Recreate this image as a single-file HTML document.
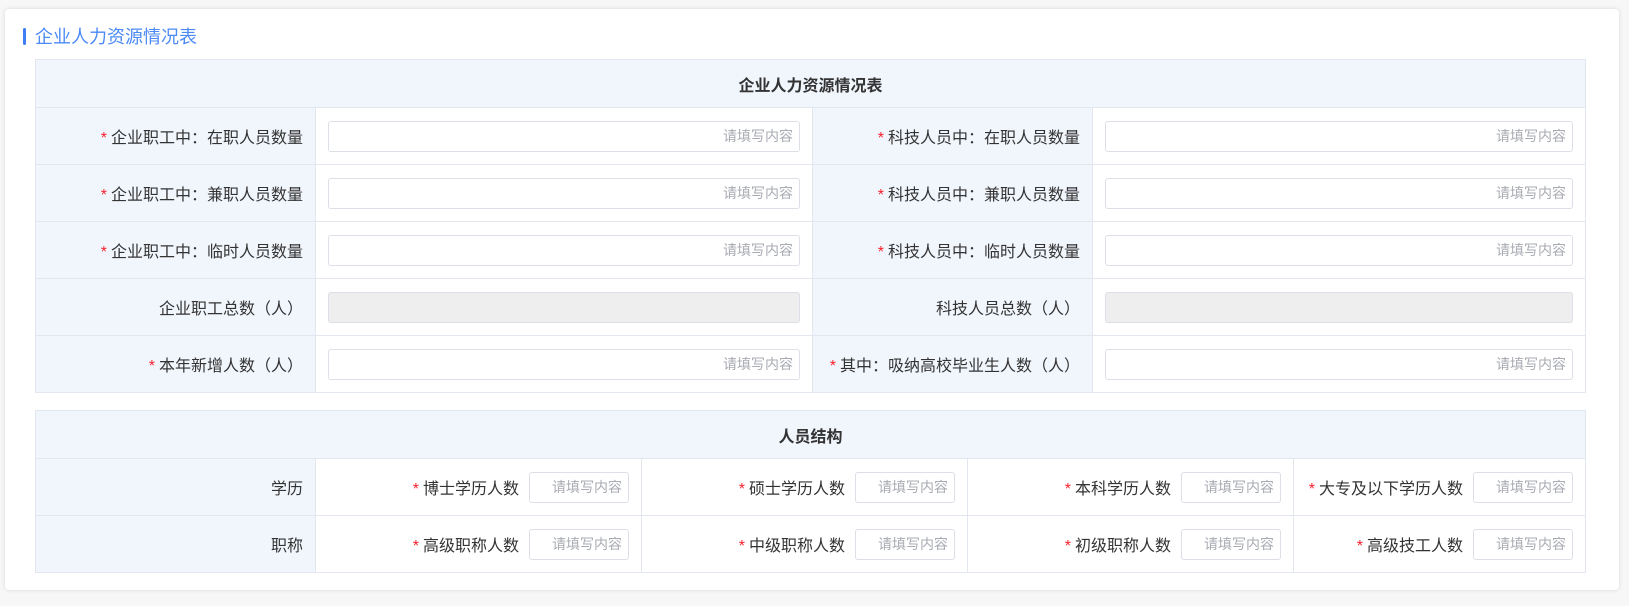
<!DOCTYPE html>
<html><head><meta charset="utf-8"><style>
*{box-sizing:border-box;margin:0;padding:0}
body{width:1629px;height:606px;background:#f7f7f7;font-family:"Liberation Sans","Noto Sans CJK SC",sans-serif;color:#333;position:relative;overflow:hidden}
.card{position:absolute;left:5px;top:9px;width:1614px;height:581px;background:#fff;border-radius:4px;box-shadow:0 0 4px rgba(0,0,0,.12)}
.title{position:absolute;left:18px;top:18px;height:20px;line-height:20px;font-size:18px;color:#4b8af5;padding-left:12px}
.title:before{content:"";position:absolute;left:0;top:1px;width:3px;height:17px;background:#3d7ef5;border-radius:2px}
table{position:absolute;left:30px;border-collapse:collapse;table-layout:fixed;font-size:16px}
td{border:1px solid #e2e6ee;height:57px;vertical-align:middle}
td.h{background:#f1f6fd;text-align:center;font-weight:bold;height:48px}
td.l{background:#f1f6fd;text-align:right;padding-right:12px}
td.v{padding:0 12px}
.s{color:#f5222d;margin-right:4px}
.in{height:31px;border:1px solid #dcdfe6;border-radius:3px;text-align:right;padding-right:6px;line-height:29px;color:#a8abb2;font-size:14px}
.ro{background:#eeeeee;border-color:#dcdfe6}
td.c{text-align:right;padding-right:12px;white-space:nowrap}
td.c span.t{display:inline-block;vertical-align:middle}
td.c .in{display:inline-block;width:100px;vertical-align:middle;margin-left:10px}
</style></head><body>
<div class="card">
<div class="title">企业人力资源情况表</div>
<table style="top:50px;width:1550px">
<colgroup><col style="width:280px"><col style="width:497px"><col style="width:280px"><col style="width:493px"></colgroup>
<tr><td class="h" colspan="4">企业人力资源情况表</td></tr>
<tr><td class="l"><span class="s">*</span>企业职工中：在职人员数量</td><td class="v"><div class="in">请填写内容</div></td><td class="l"><span class="s">*</span>科技人员中：在职人员数量</td><td class="v"><div class="in">请填写内容</div></td></tr>
<tr><td class="l"><span class="s">*</span>企业职工中：兼职人员数量</td><td class="v"><div class="in">请填写内容</div></td><td class="l"><span class="s">*</span>科技人员中：兼职人员数量</td><td class="v"><div class="in">请填写内容</div></td></tr>
<tr><td class="l"><span class="s">*</span>企业职工中：临时人员数量</td><td class="v"><div class="in">请填写内容</div></td><td class="l"><span class="s">*</span>科技人员中：临时人员数量</td><td class="v"><div class="in">请填写内容</div></td></tr>
<tr><td class="l">企业职工总数（人）</td><td class="v"><div class="in ro"></div></td><td class="l">科技人员总数（人）</td><td class="v"><div class="in ro"></div></td></tr>
<tr><td class="l"><span class="s">*</span>本年新增人数（人）</td><td class="v"><div class="in">请填写内容</div></td><td class="l"><span class="s">*</span>其中：吸纳高校毕业生人数（人）</td><td class="v"><div class="in">请填写内容</div></td></tr>
</table>
<table style="top:401px;width:1550px">
<colgroup><col style="width:280px"><col style="width:326px"><col style="width:326px"><col style="width:326px"><col style="width:292px"></colgroup>
<tr><td class="h" colspan="5">人员结构</td></tr>
<tr><td class="l">学历</td><td class="c"><span class="t"><span class="s">*</span>博士学历人数</span><div class="in">请填写内容</div></td><td class="c"><span class="t"><span class="s">*</span>硕士学历人数</span><div class="in">请填写内容</div></td><td class="c"><span class="t"><span class="s">*</span>本科学历人数</span><div class="in">请填写内容</div></td><td class="c"><span class="t"><span class="s">*</span>大专及以下学历人数</span><div class="in">请填写内容</div></td></tr>
<tr><td class="l">职称</td><td class="c"><span class="t"><span class="s">*</span>高级职称人数</span><div class="in">请填写内容</div></td><td class="c"><span class="t"><span class="s">*</span>中级职称人数</span><div class="in">请填写内容</div></td><td class="c"><span class="t"><span class="s">*</span>初级职称人数</span><div class="in">请填写内容</div></td><td class="c"><span class="t"><span class="s">*</span>高级技工人数</span><div class="in">请填写内容</div></td></tr>
</table>
</div>
</body></html>
